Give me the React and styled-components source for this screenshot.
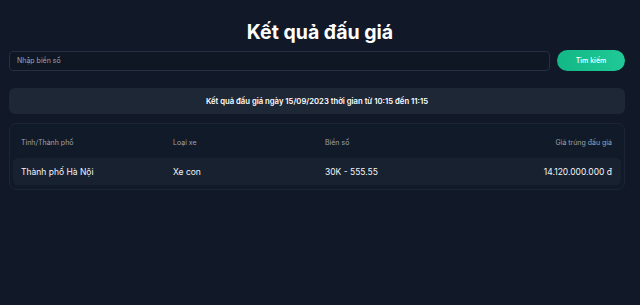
import styled, { createGlobalStyle } from "styled-components";

const GlobalStyle = createGlobalStyle`
  html, body {
    margin: 0;
    background: #111827;
    font-family: Inter, "Noto Sans", sans-serif;
    color: #f9fafb;
  }
`;

const columns = [
  { key: "city", name: "Tỉnh/Thành phố" },
  { key: "type", name: "Loại xe" },
  { key: "plate", name: "Biển số" },
  { key: "price", name: "Giá trúng đấu giá", right: true },
];

const rows = [
  {
    city: "Thành phố Hà Nội",
    type: "Xe con",
    plate: "30K - 555.55",
    price: "14.120.000.000 đ",
  },
];

const App = () => {
  return (
    <Page>
      <GlobalStyle />
      <Title>Kết quả đấu giá</Title>
      <SearchBar>
        <SearchInput placeholder="Nhập biển số" />
        <SearchButton>Tìm kiếm</SearchButton>
      </SearchBar>
      <InfoBar>Kết quả đấu giá ngày 15/09/2023 thời gian từ 10:15 đến 11:15</InfoBar>
      <TableCard>
        <Row>
          {columns.map((it) => (
            <HeadCell key={it.key} $right={it.right}>
              {it.name}
            </HeadCell>
          ))}
        </Row>
        {rows.map((row, idx) => (
          <DataRow key={idx}>
            {columns.map((it) => (
              <Cell key={it.key} $right={it.right}>
                {row[it.key]}
              </Cell>
            ))}
          </DataRow>
        ))}
      </TableCard>
    </Page>
  );
};

export default App;

const Page = styled.div`
  min-height: 305px;
  box-sizing: border-box;
  padding: 15px 15px 0 9px;
  display: flex;
  flex-direction: column;
`;

const Title = styled.h1`
  margin: 0;
  text-align: center;
  font-size: 19.5px;
  font-weight: 700;
  line-height: 32px;
  color: #ffffff;
  padding-left: 6px;
  padding-top: 1px;
`;

const SearchBar = styled.div`
  margin-top: 2px;
  display: flex;
  align-items: center;
  gap: 7px;
`;

const SearchInput = styled.input`
  flex: 1;
  height: 20px;
  box-sizing: border-box;
  padding: 0 7px;
  border: 1px solid #253041;
  border-radius: 4px;
  background: #0f1725;
  color: #e5e7eb;
  font-family: Inter, "Noto Sans", sans-serif;
  font-size: 7px;
  outline: none;

  &::placeholder {
    color: #9ca3af;
  }
`;

const SearchButton = styled.button`
  width: 68px;
  height: 21px;
  border: none;
  border-radius: 11px;
  background: linear-gradient(90deg, #12b886, #20c997);
  color: #ffffff;
  font-family: Inter, "Noto Sans", sans-serif;
  font-size: 7px;
  font-weight: 500;
  cursor: pointer;
`;

const InfoBar = styled.div`
  margin-top: 17px;
  height: 26px;
  display: flex;
  align-items: center;
  justify-content: center;
  border-radius: 6px;
  background: #1e2735;
  font-size: 7.7px;
  font-weight: 600;
  color: #ffffff;
`;

const TableCard = styled.div`
  margin-top: 9px;
  padding: 3px 3px 4px;
  border: 1px solid #1c2533;
  border-radius: 7px;
  background: #111a28;
`;

const Row = styled.div`
  display: grid;
  grid-template-columns: 152px 152px 152px 1fr;
  align-items: center;
  padding: 0 9px 0 8px;
  height: 31px;
`;

const DataRow = styled(Row)`
  height: 27px;
  border-radius: 5px;
  background: #182130;
`;

const HeadCell = styled.div`
  font-size: 7px;
  color: #9ca3af;
  text-align: ${(p) => (p.$right ? "right" : "left")};
`;

const Cell = styled.div`
  font-size: 8.5px;
  color: #f3f4f6;
  text-align: ${(p) => (p.$right ? "right" : "left")};
`;
